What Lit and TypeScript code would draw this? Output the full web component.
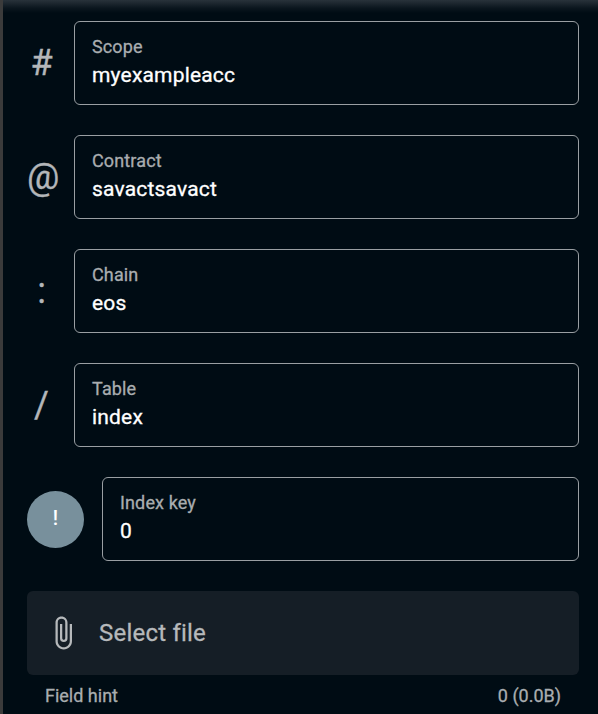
import { LitElement, html, css } from "lit";
import { customElement, property } from "lit/decorators.js";

@customElement("text-field")
class TextField extends LitElement {
  @property() label = "";
  @property() value = "";

  static styles = css`
    :host {
      display: block;
      flex: 1;
    }
    .control {
      box-sizing: border-box;
      height: 84px;
      padding: 10px 17px 0;
      border: 1px solid #9a9fa3;
      border-radius: 6px;
    }
    .label {
      font-size: 18px;
      line-height: 30px;
      letter-spacing: 0.13px;
      -webkit-text-stroke: 0.3px currentColor;
      color: #a9adb0;
    }
    .value {
      font-size: 21px;
      line-height: 36px;
      margin-top: -5px;
      letter-spacing: 0.18px;
      -webkit-text-stroke: 0.3px currentColor;
      color: #fff;
    }
  `;

  render() {
    return html`<div class="control">
      <div class="label">${this.label}</div>
      <div class="value">${this.value}</div>
    </div>`;
  }
}

@customElement("app-root")
class AppRoot extends LitElement {
  static styles = css`
    :host {
      display: block;
      box-sizing: border-box;
      height: 714px;
      overflow: hidden;
      border-left: 3px solid #3b3b3b;
      padding: 21px 19px 0 24px;
      background: linear-gradient(#28323a, #1a242c 4px, #0b161e 8px, #000c14 13px);
      font-family: Roboto, "Liberation Sans", sans-serif;
    }
    .form {
      display: flex;
      flex-direction: column;
      gap: 30px;
    }
    .row {
      display: flex;
      align-items: center;
    }
    .symbol {
      width: 47px;
      box-sizing: border-box;
      padding-right: 18px;
      display: flex;
      justify-content: safe center;
      font-size: 36px;
      line-height: 36px;
      -webkit-text-stroke: 0.3px currentColor;
      color: #b3b6b9;
    }
    .badge {
      box-sizing: border-box;
      width: 57px;
      height: 57px;
      margin-right: 18px;
      padding-bottom: 2px;
      border-radius: 50%;
      display: flex;
      align-items: center;
      justify-content: center;
      background: #78909c;
      color: #fff;
      font-size: 20px;
      font-weight: 500;
    }
    .file {
      height: 84px;
      box-sizing: border-box;
      padding: 0 18px;
      border-radius: 6px;
      background: #151e26;
      color: #b6b9bb;
      font-size: 24px;
      -webkit-text-stroke: 0.3px currentColor;
      letter-spacing: 0.22px;
    }
    .clip {
      width: 36px;
      height: 36px;
      margin-right: 18px;
      fill: currentColor;
    }
    .hint {
      display: flex;
      justify-content: space-between;
      padding: 12px 18px 0;
      font-size: 18px;
      line-height: 18px;
      -webkit-text-stroke: 0.3px currentColor;
      color: #a9adb0;
    }
  `;

  private fields = [
    { symbol: "#", label: "Scope", value: "myexampleacc" },
    { symbol: "@", label: "Contract", value: "savactsavact" },
    { symbol: ":", label: "Chain", value: "eos" },
    { symbol: "/", label: "Table", value: "index" },
  ];

  render() {
    return html`
      <div class="form">
        ${this.fields.map(
          (f) => html`<div class="row">
            <div class="symbol">${f.symbol}</div>
            <text-field .label=${f.label} .value=${f.value}></text-field>
          </div>`
        )}
        <div class="row">
          <div class="badge">!</div>
          <text-field label="Index key" value="0"></text-field>
        </div>
        <div class="row file">
          <svg class="clip" viewBox="0 0 24 24">
            <path
              d="M16.5 6v11.5c0 2.21-1.79 4-4 4s-4-1.79-4-4V5a2.5 2.5 0 0 1 5 0v10.5c0 .55-.45 1-1 1s-1-.45-1-1V6H10v9.5a2.5 2.5 0 0 0 5 0V5c0-2.21-1.79-4-4-4S7 2.79 7 5v12.5c0 3.04 2.46 5.5 5.5 5.5s5.5-2.46 5.5-5.5V6h-1.5z"
            />
          </svg>
          <span>Select file</span>
        </div>
      </div>
      <div class="hint"><span>Field hint</span><span>0 (0.0B)</span></div>
    `;
  }
}
